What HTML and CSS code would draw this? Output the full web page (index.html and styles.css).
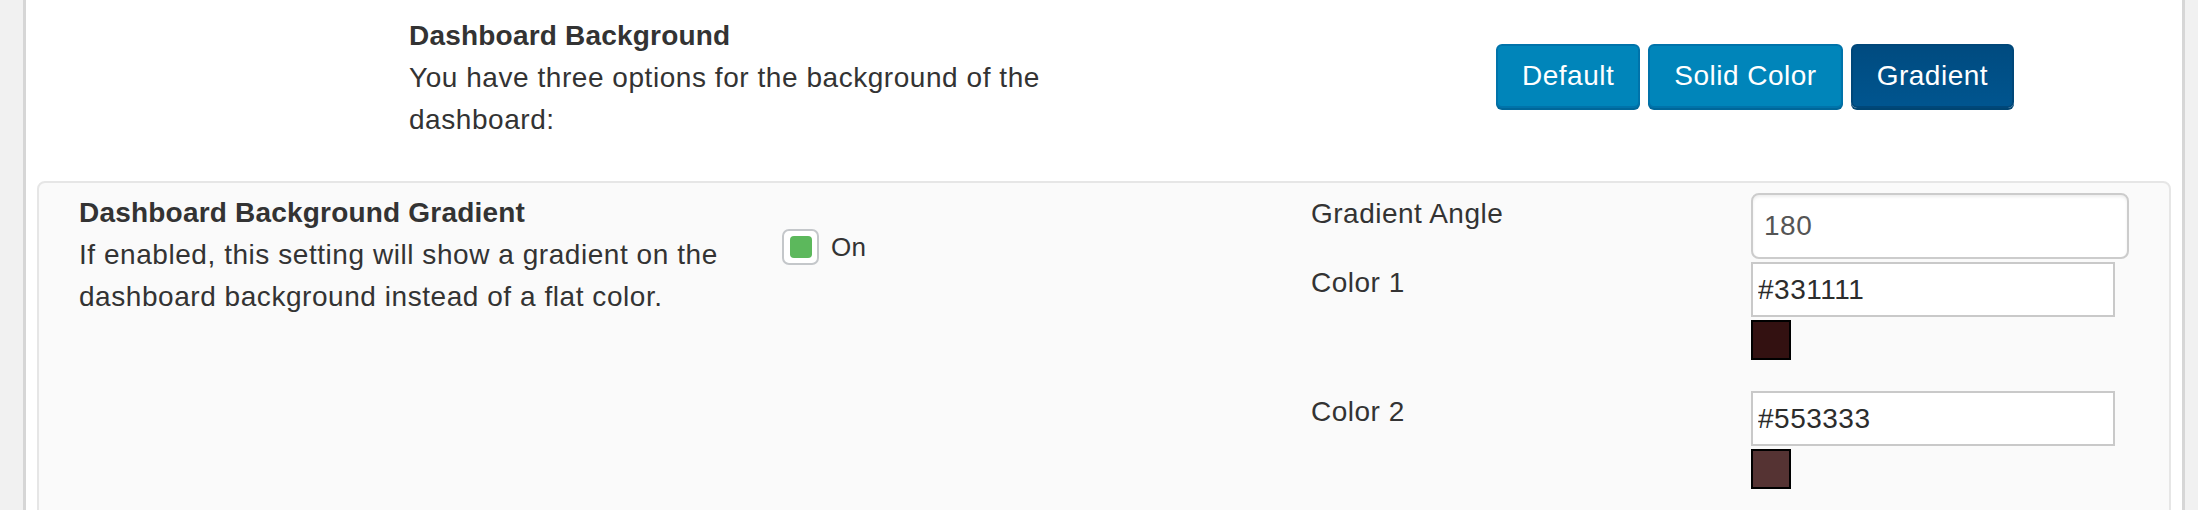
FILE: index.html
```html
<!DOCTYPE html>
<html lang="en">
<head>
<meta charset="utf-8">
<title>Dashboard Background</title>
<link rel="stylesheet" href="styles.css">
</head>
<body>
<div class="wrap">
  <section class="top">
    <div class="top-desc">
      <div class="title">Dashboard Background</div>
      <div class="text">You have three options for the background of the dashboard:</div>
    </div>
    <div class="btn-group">
      <button class="btn">Default</button>
      <button class="btn">Solid Color</button>
      <button class="btn active">Gradient</button>
    </div>
  </section>
  <section class="panel">
    <div class="gdesc">
      <div class="title">Dashboard Background Gradient</div>
      <div class="text">If enabled, this setting will show a gradient on the dashboard background instead of a flat color.</div>
    </div>
    <div class="toggle">
      <span class="check"><span class="check-fill"></span></span>
      <span class="toggle-label">On</span>
    </div>
    <div class="fields">
      <div class="field field-angle">
        <label class="field-label">Gradient Angle</label>
        <div class="field-control">
          <input class="input-angle" type="text" value="180">
        </div>
      </div>
      <div class="field field-c1">
        <label class="field-label">Color 1</label>
        <div class="field-control">
          <input class="input-color" type="text" value="#331111">
          <span class="swatch swatch-1"></span>
        </div>
      </div>
      <div class="field field-c2">
        <label class="field-label">Color 2</label>
        <div class="field-control">
          <input class="input-color" type="text" value="#553333">
          <span class="swatch swatch-2"></span>
        </div>
      </div>
    </div>
  </section>
</div>
</body>
</html>
```

FILE: styles.css
```css
* { box-sizing: border-box; }

html, body {
  margin: 0;
  padding: 0;
}

body {
  background: #f1f1f1;
  font-family: "Liberation Sans", Arial, sans-serif;
  font-size: 28px;
  line-height: 42px;
  color: #333;
  overflow: hidden;
}

.wrap {
  margin-left: 23px;
  margin-right: 13px;
  border-left: 3px solid #d6d6d6;
  border-right: 3px solid #d6d6d6;
  background: #fff;
  min-height: 510px;
  padding: 0 11px;
}

.title {
  font-weight: bold;
  letter-spacing: 0.2px;
}

.text {
  letter-spacing: 0.55px;
}

/* top row */
.top {
  display: flex;
  align-items: flex-start;
  height: 181px;
  padding-top: 15px;
  padding-left: 372px;
}

.top-desc {
  flex: 0 0 680px;
}

.btn-group {
  display: flex;
  gap: 8px;
  margin-left: 407px;
  margin-top: 29px;
}

.btn {
  height: 64px;
  padding: 0 24px;
  border: 2px solid #0073aa;
  border-radius: 6px;
  background: #0085ba;
  box-shadow: 0 2px 0 #006799;
  color: #fff;
  font-family: "Liberation Sans", Arial, sans-serif;
  font-size: 28px;
  letter-spacing: 0.5px;
  line-height: 58px;
  cursor: pointer;
}

.btn.active {
  background: linear-gradient(#004b80, #00558f);
  border-color: #004779;
  box-shadow: 0 2px 0 #004572;
}

/* panel */
.panel {
  display: flex;
  align-items: flex-start;
  background: #fafafa;
  border: 2px solid #e6e6e6;
  border-radius: 8px;
  padding: 9px 40px 60px 40px;
}

.gdesc {
  flex: 0 0 690px;
  margin-right: 13px;
}

.toggle {
  flex: 0 0 529px;
  display: flex;
  align-items: center;
  gap: 12px;
  margin-top: 34px;
}

.check {
  width: 37px;
  height: 36px;
  border: 2px solid #c4c7ca;
  border-radius: 7px;
  background: #fff;
  display: flex;
  align-items: center;
  justify-content: center;
}

.check-fill {
  width: 22px;
  height: 22px;
  border-radius: 4px;
  background: #5cb85c;
}

.toggle-label {
  font-size: 26px;
  letter-spacing: 0.4px;
  color: #333;
}

.fields {
  flex: 1;
}

.field {
  display: flex;
  align-items: flex-start;
}

.field-label {
  flex: 0 0 440px;
  letter-spacing: 0.5px;
}

.field-control {
  display: flex;
  flex-direction: column;
  align-items: flex-start;
}

.field-angle { margin-top: 1px; }
.field-c1 { margin-top: 3px; }
.field-c2 { margin-top: 31px; }

input {
  font-family: "Liberation Sans", Arial, sans-serif;
  font-size: 28px;
  letter-spacing: 0.5px;
  margin: 0;
  outline: none;
}

.input-angle {
  width: 378px;
  height: 66px;
  border: 2px solid #cccccc;
  border-radius: 8px;
  background: #fff;
  box-shadow: inset 0 2px 3px rgba(0, 0, 0, 0.07);
  padding: 0 11px;
  color: #555;
}

.input-color {
  width: 364px;
  height: 55px;
  border: 2px solid #c9c9c9;
  border-radius: 0;
  background: #fff;
  padding: 0 5px;
  color: #2c2c2c;
}

.swatch {
  display: block;
  width: 40px;
  height: 40px;
  margin-top: 3px;
  border: 2px solid #000;
}

.swatch-1 { background: #331111; }
.swatch-2 { background: #553333; }
```
